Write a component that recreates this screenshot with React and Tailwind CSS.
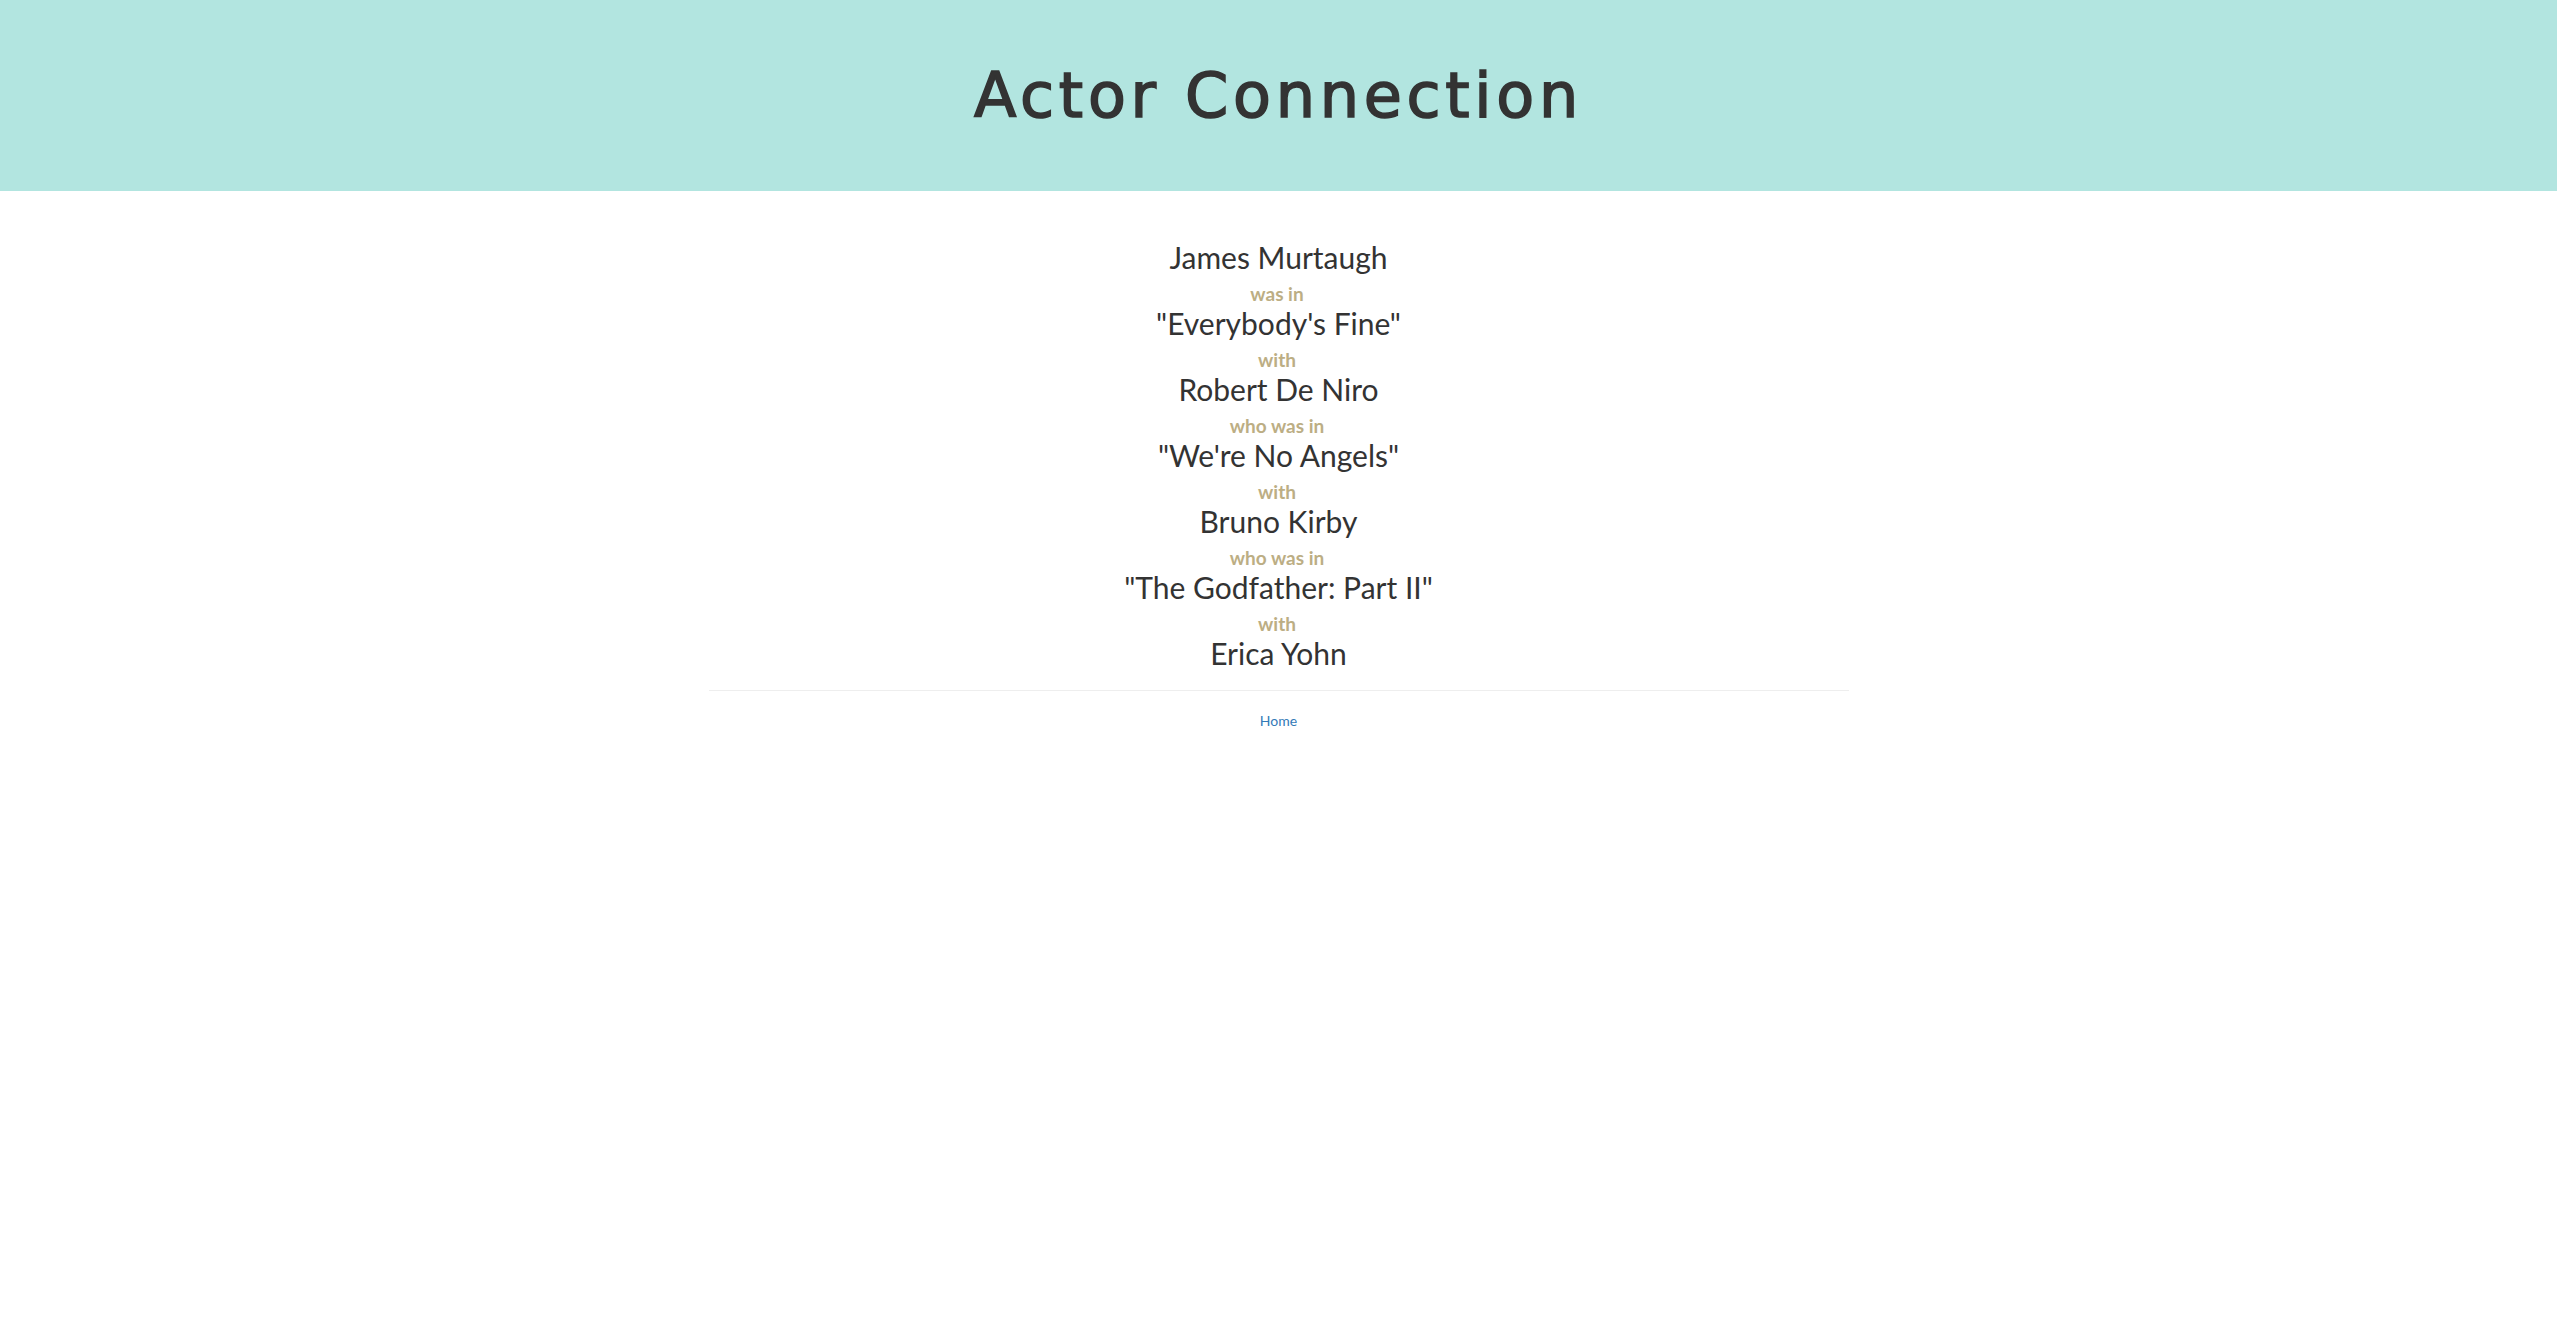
import React from "react";

const chain = [
  { name: "James Murtaugh", label: "was in" },
  { name: "\"Everybody's Fine\"", label: "with" },
  { name: "Robert De Niro", label: "who was in" },
  { name: "\"We're No Angels\"", label: "with" },
  { name: "Bruno Kirby", label: "who was in" },
  { name: "\"The Godfather: Part II\"", label: "with" },
  { name: "Erica Yohn", label: null },
];

export default function App() {
  return (
    <div className="min-h-screen bg-white font-['Lato','Noto_Sans',sans-serif] text-[#333333]">
      <header className="h-[191px] bg-[#b2e5e0] flex items-center justify-center">
        <h1 className="font-['DejaVu_Sans','Verdana',sans-serif] text-[62px] leading-none tracking-[4.7px] text-[#333333] [-webkit-text-stroke:1.6px_#333333]">
          Actor Connection
        </h1>
      </header>
      <main className="w-[1170px] mx-auto px-[15px]">
        <div className="flex flex-col items-center pt-[48px]">
          {chain.map((c, i) => (
            <React.Fragment key={i}>
              <div className="text-[30px] leading-[36px]">{c.name}</div>
              {c.label && (
                <div className="pt-[8px] pr-[3px] text-[19px] leading-[22px] font-bold text-[#bcae84]">
                  {c.label}
                </div>
              )}
            </React.Fragment>
          ))}
        </div>
        <hr className="mt-[19px] border-0 border-t border-[#eeeeee]" />
        <div className="flex justify-center pt-[20px]">
          <a href="#" className="text-[14px] leading-[20px] text-[#337ab7]">
            Home
          </a>
        </div>
      </main>
    </div>
  );
}
